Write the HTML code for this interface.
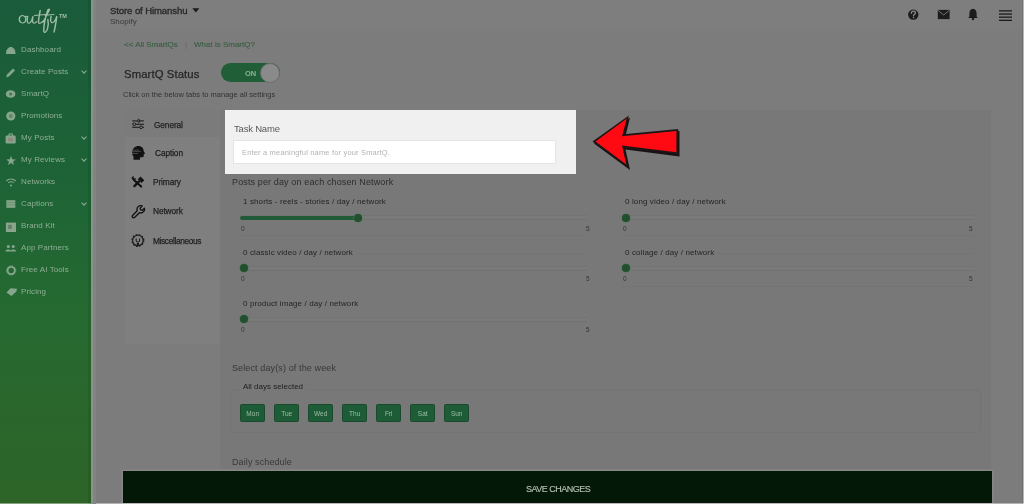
<!DOCTYPE html>
<html><head><meta charset="utf-8">
<style>
*{margin:0;padding:0;box-sizing:border-box}
html,body{width:1024px;height:504px;overflow:hidden;background:#7c7c7c;font-family:"Liberation Sans",sans-serif}
.a{position:absolute;white-space:nowrap}
#side{position:absolute;left:0;top:0;width:91px;height:504px;background:linear-gradient(180deg,#1a5b3b 0%,#1d6336 35%,#266a31 62%,#2e6428 100%)}
.si{position:absolute;left:21px;font-size:8px;color:#8fae95;letter-spacing:0.1px}
.sic{position:absolute;left:6px;width:10px;height:8px;background:#9fbfa5;border-radius:3px}
.chev{position:absolute;left:82px;width:4px;height:4px;border-right:1px solid #8fae96;border-bottom:1px solid #8fae96;transform:rotate(45deg)}
.t{color:#262626}
.tab{position:absolute;font-size:8.3px;color:#222;-webkit-text-stroke:0.25px #222;letter-spacing:-0.1px}
.trk{height:5px;border-top:1px solid #737373;border-bottom:1px solid #717171;background:#7a7a7a}
.sep{height:1px;background:#747474}
.stx{z-index:2;font-size:8px;color:#242424;letter-spacing:0.12px;background:#787878;padding-right:3px}
.thumb{width:8px;height:8px;border-radius:50%;background:#22502f;box-shadow:0 0 0 0.6px #4d7658}
.lbl{font-size:6.5px;color:#333}
.day{position:absolute;top:404.3px;width:25.4px;height:17.8px;background:#1e5b37;border:0.5px solid #1a4a2e;color:#9dbfa6;font-size:6.5px;text-align:center;line-height:17px;border-radius:1.5px}

body>*{will-change:transform}
</style></head><body>
<div id="side">
<svg class="a" style="left:0;top:0" width="91" height="40" viewBox="0 0 91 40">
<g fill="none" stroke="#9fbda4" stroke-width="1.05" stroke-linecap="round" stroke-linejoin="round" transform="translate(19,0) scale(1.36,1) translate(-19,0)" vector-effect="non-scaling-stroke">
<path d="M22.8,16.2 C21,14.6 19,16.4 19.2,19.6 C19.4,22.6 21.6,23.8 23,22.4 C24.4,21 24.4,17.4 22.8,16.2 C23.6,16.6 24.2,16.6 24.8,16.2"/>
<path d="M25.4,16.4 C25,18.8 24.8,21.8 25.6,23 C26.6,24 28.4,22.2 29.2,16.6 C28.8,19.6 28.8,22.8 30,23.2 C30.8,23.3 31.4,22.6 32,21.6"/>
<path d="M34.6,10.4 C34,14.6 33.2,19.6 33.4,22.4 C33.6,24 35.2,23.6 36.4,21.2"/>
<path d="M30.4,15.4 C33.2,15 35.8,14.8 38.6,14.6"/>
<path d="M36.6,22.2 C38.6,17.8 40.2,13 41.2,10.2 C41.8,8.6 40.6,8.4 40,10.6 C38.6,16.4 37.2,25 37.2,30.4 C37.2,34 39.2,32.4 40,28.4 C40.6,25 40.6,21.6 40.2,19.4"/>
<path d="M38.2,15.2 C40.4,15 42.6,14.8 44.6,14.6"/>
<path d="M42.6,16.2 C42.2,18.8 42,21.8 43,22.6 C44,23.2 45.8,21 46.8,16.4 C46.4,21 45.6,27 44.8,32.2"/>
</g>
<text x="59" y="18" font-size="5.5" font-weight="bold" fill="#9fbda4" font-family="Liberation Sans">TM</text>
</svg>
<svg class="a" style="left:0;top:0" width="91" height="300" viewBox="0 0 91 300">
<path d="M6,54 C6,49 8.5,47 10.8,47 C13.2,47 15.5,49 15.5,54 Z" fill="#86a68c"/>
<path d="M6.2,77.4 L7,74.4 L13,68.6 L15,70.6 L9,76.5 Z" fill="#86a68c"/>
<ellipse cx="10.6" cy="94" rx="4.8" ry="3.8" fill="#86a68c"/><circle cx="10.6" cy="94" r="1.5" fill="#3f7a52"/>
<circle cx="10.8" cy="116" r="4.6" fill="#86a68c"/><circle cx="10.8" cy="116" r="2" fill="#5a8a66"/>
<path d="M9,136 L9,134.4 C9,133.6 12.4,133.6 12.4,134.4 L12.4,136" fill="none" stroke="#86a68c" stroke-width="1.2"/><rect x="5.6" y="135.6" width="10.1" height="7.8" rx="1.2" fill="#86a68c"/><rect x="8" y="137.8" width="5" height="3.6" fill="#93867f"/>
<polygon points="11,156 12.3,159.3 15.7,159.5 13,161.7 14,165 11,163 8,165 9,161.7 6.3,159.5 9.7,159.3" fill="#86a68c"/>
<path d="M6.3,181 A6.5,6.5 0 0 1 15.7,181" fill="none" stroke="#86a68c" stroke-width="1.1"/><path d="M8.2,183 A3.8,3.8 0 0 1 13.8,183" fill="none" stroke="#86a68c" stroke-width="1.1"/><circle cx="11" cy="185.6" r="1" fill="#86a68c"/>
<rect x="6.3" y="200.2" width="9" height="7.6" fill="#86a68c"/><g stroke="#5b8a62" stroke-width="0.7"><line x1="6.3" y1="202.6" x2="15.3" y2="202.6"/><line x1="6.3" y1="205" x2="15.3" y2="205"/></g>
<rect x="5.9" y="222.6" width="10.1" height="9.4" fill="#8aa58d"/><rect x="8.2" y="224.8" width="3.6" height="4.2" fill="#5f8264"/>
<circle cx="8.3" cy="246.5" r="1.6" fill="#86a68c"/><circle cx="13.2" cy="246.5" r="1.6" fill="#86a68c"/><path d="M5.4,251.4 C5.6,248.8 11,248.8 11,251.4 Z M10.5,251.4 C10.7,248.8 16,248.8 16,251.4Z" fill="#86a68c"/>
<circle cx="11.2" cy="270.5" r="3.6" fill="none" stroke="#86a68c" stroke-width="1.8"/><circle cx="11.2" cy="270.5" r="4.6" fill="none" stroke="#86a68c" stroke-width="1" stroke-dasharray="1.2 1.2"/>
<path d="M6.5,292.5 L10.5,288.2 L17,288.8 L16.4,291.5 L11.5,296 Z" fill="#86a68c"/>
</svg>
<div class="si" style="top:45px">Dashboard</div>
<div class="si" style="top:67px">Create Posts</div>
<div class="chev" style="top:69px"></div>
<div class="si" style="top:89px">SmartQ</div>
<div class="si" style="top:111px">Promotions</div>
<div class="si" style="top:133px">My Posts</div>
<div class="chev" style="top:135px"></div>
<div class="si" style="top:155px">My Reviews</div>
<div class="chev" style="top:157px"></div>
<div class="si" style="top:177px">Networks</div>
<div class="si" style="top:199px">Captions</div>
<div class="chev" style="top:201px"></div>
<div class="si" style="top:221px">Brand Kit</div>
<div class="si" style="top:243px">App Partners</div>
<div class="si" style="top:265px">Free AI Tools</div>
<div class="si" style="top:287px">Pricing</div>
</div>

<!-- header -->

<div class="a" style="left:91px;top:0;width:933px;height:29px;background:#7e7e7e"></div>
<div class="a t" style="left:109.5px;top:4.5px;font-size:9.6px;letter-spacing:-0.12px;-webkit-text-stroke:0.3px #262626">Store of Himanshu</div>
<svg class="a" style="left:192px;top:8px" width="8" height="5" viewBox="0 0 8 5"><polygon points="0.3,0.2 7.4,0.2 3.85,4.6" fill="#1a1a1a"/></svg>
<div class="a" style="left:110px;top:17px;font-size:8px;color:#3a3a3a">Shopify</div>

<!-- links -->
<div class="a" style="left:123.5px;top:39.5px;font-size:8px;color:#3a5f45;-webkit-text-stroke:0.15px #3a5f45">&lt;&lt; All SmartQs</div><div class="a" style="left:184.5px;top:40px;font-size:8px;color:#666">|</div><div class="a" style="left:193.5px;top:39.5px;font-size:8px;color:#3a5f45;-webkit-text-stroke:0.15px #3a5f45">What is SmartQ?</div>
<div class="a t" style="left:123.5px;top:67.5px;font-size:11.3px;-webkit-text-stroke:0.25px #262626;letter-spacing:0.1px">SmartQ Status</div>
<div class="a" style="left:221px;top:63px;width:59px;height:19px;border-radius:10px;background:#1f5e37"></div>
<div class="a" style="left:244.5px;top:68.5px;font-size:7.5px;font-weight:bold;color:#8db199">ON</div>
<div class="a" style="left:260px;top:63px;width:20px;height:20px;border-radius:50%;background:#8a8a8a;border:1px solid #6c6c6c"></div>
<div class="a" style="left:123px;top:90px;font-size:7.5px;color:#333">Click on the below tabs to manage all settings</div>

<!-- tabs panel -->
<div class="a" style="left:124.5px;top:110px;width:95.5px;height:233.5px;background:#7f7f7f"></div>
<div class="a" style="left:124px;top:110px;width:98px;height:27px;background:#7b7b7b"></div>
<!-- main panel -->
<div class="a" style="left:220px;top:110px;width:771px;height:361px;background:#787878"></div>

<div class="tab" style="left:153.5px;top:119.5px">General</div>
<div class="tab" style="left:154.5px;top:147.5px">Caption</div>
<div class="tab" style="left:153px;top:177px">Primary</div>
<div class="tab" style="left:152.6px;top:205.5px">Network</div>
<div class="tab" style="left:153px;top:235.5px;letter-spacing:-0.35px">Miscellaneous</div>

<!-- highlight -->
<div class="a" style="left:225px;top:110px;width:351px;height:64px;background:#f0f0f0"></div>
<div class="a" style="left:233.5px;top:123.2px;font-size:9.5px;color:#5a5a5a;letter-spacing:-0.2px">Task Name</div>
<div class="a" style="left:233px;top:140px;width:323px;height:24px;background:#fff;border:1px solid #e4e4e4"></div>
<div class="a" style="left:242px;top:147.5px;font-size:7.5px;color:#b3b3b3;letter-spacing:0.17px">Enter a meaningful name for your SmartQ.</div>

<div class="a" style="left:231.5px;top:177px;font-size:9px;color:#2e2e2e;letter-spacing:0.13px">Posts per day on each chosen Network</div>


<!-- sliders -->
<div class="a stx" style="left:242.5px;top:197px">1 shorts - reels - stories / day / network</div>
<div class="a trk" style="left:240px;top:215.4px;width:347px"></div>
<div class="a" style="left:240px;top:215.5px;width:118px;height:4.3px;border-radius:2px;background:#215a36"></div>
<div class="a thumb" style="left:354px;top:213.5px"></div>
<div class="a lbl" style="left:240.5px;top:224.5px">0</div>
<div class="a lbl" style="left:586px;top:224.5px">5</div>
<div class="a sep" style="left:240px;top:235.0px;width:347px"></div>
<div class="a stx" style="left:242.5px;top:248px">0 classic video / day / network</div>
<div class="a sep" style="left:240px;top:253px;width:347px"></div>
<div class="a trk" style="left:240px;top:265.9px;width:347px"></div>
<div class="a thumb" style="left:240px;top:264px"></div>
<div class="a lbl" style="left:240.5px;top:275px">0</div>
<div class="a lbl" style="left:586px;top:275px">5</div>
<div class="a stx" style="left:242.5px;top:299px">0 product image / day / network</div>
<div class="a trk" style="left:240px;top:316.9px;width:347px"></div>
<div class="a thumb" style="left:240px;top:315px"></div>
<div class="a lbl" style="left:240.5px;top:326px">0</div>
<div class="a lbl" style="left:586px;top:326px">5</div>
<div class="a stx" style="left:624.5px;top:197px">0 long video / day / network</div>
<div class="a trk" style="left:622px;top:215.4px;width:352px"></div>
<div class="a thumb" style="left:622px;top:213.5px"></div>
<div class="a lbl" style="left:622.5px;top:224.5px">0</div>
<div class="a lbl" style="left:969px;top:224.5px">5</div>
<div class="a sep" style="left:622px;top:235.0px;width:352px"></div>
<div class="a stx" style="left:624.5px;top:248px">0 collage / day / network</div>
<div class="a sep" style="left:622px;top:253px;width:352px"></div>
<div class="a trk" style="left:622px;top:265.9px;width:352px"></div>
<div class="a thumb" style="left:622px;top:264px"></div>
<div class="a lbl" style="left:622.5px;top:275px">0</div>
<div class="a lbl" style="left:969px;top:275px">5</div>
<div class="a sep" style="left:622px;top:285.5px;width:352px"></div>

<!-- days -->
<div class="a" style="left:231.5px;top:363px;font-size:9px;color:#383838;letter-spacing:0.12px">Select day(s) of the week</div>
<div class="a" style="left:230px;top:389px;width:751px;height:44px;border:1px solid #737373;border-radius:5px"></div>
<div class="a" style="left:238px;top:379px;width:70px;height:14px;background:#787878"></div>
<div class="a" style="left:242.5px;top:381.5px;font-size:8px;color:#1e1e1e">All days selected</div>
<div class="day" style="left:239.6px">Mon</div>
<div class="day" style="left:273.7px">Tue</div>
<div class="day" style="left:307.8px">Wed</div>
<div class="day" style="left:341.9px">Thu</div>
<div class="day" style="left:376.0px">Fri</div>
<div class="day" style="left:410.1px">Sat</div>
<div class="day" style="left:444.2px">Sun</div>
<div class="a" style="left:231.5px;top:457px;font-size:9px;color:#383838;letter-spacing:0.1px">Daily schedule</div>


<!-- arrow -->
<svg class="a" style="left:580px;top:105px" width="110" height="75" viewBox="580 105 110 75">
  <polygon points="594,143.5 630,117.5 625.5,136 679.5,131 679.5,156.5 625.5,149.5 630,170" fill="#1a1212"/>
  <polygon points="592.5,141.6 628.9,115.4 623.7,134.3 678.2,129.1 678.2,154.5 623.7,147.4 628.2,168.1" fill="#1e1616"/>
  <polygon points="595.5,141.6 626.8,118.6 622.0,136.2 676.4,131.0 676.4,152.3 622.0,145.6 626.3,164.5" fill="#ff0a12"/>
</svg>
<!-- top icons -->
<svg class="a" style="left:900px;top:0px" width="124" height="30" viewBox="900 0 124 30">
  <circle cx="913.3" cy="14.6" r="5.2" fill="#1c1c1c"/>
  <path d="M911.4,13.2 c0,-1.3 0.9,-2.1 2,-2.1 c1.1,0 2,0.8 2,1.8 c0,1.3 -1.9,1.5 -1.9,2.9" fill="none" stroke="#8c8c8c" stroke-width="1.3" stroke-linecap="round"/><circle cx="913.5" cy="17.6" r="0.75" fill="#8c8c8c"/>
  <rect x="937.8" y="9.9" width="11.8" height="9.2" fill="#1c1c1c"/>
  <polyline points="938.3,10.5 943.7,15 949.1,10.5" fill="none" stroke="#7d7d7d" stroke-width="0.9"/>
  <path d="M973,8.7 c-2.6,0 -3.6,2.2 -3.6,4.8 l0,3 -1.2,1.6 l9.6,0 -1.2,-1.6 l0,-3 c0,-2.6 -1,-4.8 -3.6,-4.8z" fill="#1c1c1c"/>
  <circle cx="973" cy="19" r="1.2" fill="#1c1c1c"/>
  <rect x="999" y="10.2" width="13" height="1.3" fill="#1c1c1c"/>
  <rect x="999" y="13.4" width="13" height="1.3" fill="#1c1c1c"/>
  <rect x="999" y="16.5" width="13" height="1.3" fill="#1c1c1c"/>
  <rect x="999" y="19.7" width="13" height="1.3" fill="#1c1c1c"/>
</svg>
<!-- tab icons -->
<svg class="a" style="left:128px;top:113px" width="20" height="20" viewBox="0 0 20 20">
  <g stroke="#1e1e1e" stroke-width="1.1" fill="none"><line x1="4.2" y1="7.9" x2="15.9" y2="7.9"/><line x1="4.2" y1="11.3" x2="15.9" y2="11.3"/><line x1="4.2" y1="14.3" x2="15.9" y2="14.3"/></g>
  <g stroke="#1e1e1e" stroke-width="1" fill="#787878"><ellipse cx="10.7" cy="7.9" rx="0.9" ry="1.7"/><circle cx="6.3" cy="11.3" r="1.4"/><circle cx="13.1" cy="14.3" r="1.4"/></g>
</svg>
<svg class="a" style="left:128px;top:142px" width="20" height="20" viewBox="0 0 20 20">
  <path d="M5.5,17.7 L5.5,14.5 C4.5,13.5 4.2,12 4.2,10.5 C4.2,6.5 7,3.9 10.5,3.9 C13.8,3.9 15.7,6.3 15.7,9.2 L17.1,11.6 L15.7,12.2 L15.7,14 C15.7,14.8 15.2,15.2 14.4,15.2 L12,15.2 L12,17.7 Z" fill="#121212"/>
  <g stroke="#5a5a5a" stroke-width="0.7"><line x1="4.2" y1="8.2" x2="11" y2="8.2"/><line x1="4.2" y1="9.6" x2="13" y2="9.6"/><line x1="4.2" y1="11.5" x2="10" y2="11.5"/></g>
</svg>
<svg class="a" style="left:128px;top:172px" width="20" height="20" viewBox="0 0 20 20">
  <g stroke="#121212" stroke-linecap="round" fill="none">
    <line x1="6" y1="8" x2="13.2" y2="14.6" stroke-width="2.1"/>
    <line x1="10.8" y1="9.6" x2="6.4" y2="14.1" stroke-width="2.3"/>
  </g>
  <path d="M3.6,6.6 C3.4,5 4.6,4 6,4.2 L5.4,5.6 L6.4,6.6 L7.8,6 C8,7.4 6.8,8.8 5.2,8.6 Z" fill="#121212"/>
  <polygon points="9.8,7.2 12.5,4.5 16.3,8.2 13.6,10.9" fill="#121212"/>
</svg>
<svg class="a" style="left:128px;top:201px" width="20" height="20" viewBox="0 0 20 20">
  <path d="M4.8,14.2 L9.2,9.8 C8.4,7.6 9.6,5 12.2,4.6 C13,4.5 13.6,4.6 14.2,4.9 L12.2,7.1 L12.6,8.9 L14.4,9.3 L16.4,7.2 C16.8,8.2 16.6,9.4 16,10.2 C14.9,11.8 12.9,12.3 11.4,11.7 L6.8,16.2 C6.2,16.8 5.1,16.8 4.5,16.2 C3.9,15.6 4,14.9 4.8,14.2 Z" fill="none" stroke="#121212" stroke-width="1.35" stroke-linejoin="round"/>
</svg>
<svg class="a" style="left:128px;top:229px" width="20" height="20" viewBox="0 0 20 20">
  <circle cx="9.9" cy="11.5" r="5.3" fill="none" stroke="#1a1a1a" stroke-width="1.1"/>
  <circle cx="9.9" cy="11.5" r="5.9" fill="none" stroke="#1a1a1a" stroke-width="1.2" stroke-dasharray="1.6 1.5"/>
  <path d="M8.2,9.5 L8.2,12 L9,13 L10.8,13 L11.6,12 L11.6,9.5" fill="none" stroke="#1a1a1a" stroke-width="1"/>
  <rect x="8.8" y="14" width="2.2" height="2.5" fill="#1a1a1a"/>
</svg>

<!-- save bar -->
<div class="a" style="left:123px;top:471px;width:869px;height:32px;background:#031807;box-shadow:0 0 0 1.5px #868686"></div>
<div class="a" style="left:525.5px;top:483.5px;font-size:9px;color:#b5bfb2;-webkit-text-stroke:0.15px #b5bfb2;letter-spacing:-0.5px">SAVE CHANGES</div>
<div class="a" style="left:1022px;top:0;width:1px;height:504px;background:rgba(0,0,0,0.1)"></div>
<div class="a" style="left:1023px;top:0;width:1px;height:504px;background:rgba(255,255,255,0.45)"></div>
<div class="a" style="left:0;top:503px;width:1024px;height:1px;background:rgba(255,255,255,0.42)"></div>
<div class="a" style="left:91px;top:0;width:2px;height:504px;background:#889488"></div><div class="a" style="left:93px;top:0;width:3px;height:504px;background:#838383"></div>
<div class="a" style="left:88px;top:0;width:3px;height:504px;background:rgba(0,0,0,0.07)"></div>
</body></html>
